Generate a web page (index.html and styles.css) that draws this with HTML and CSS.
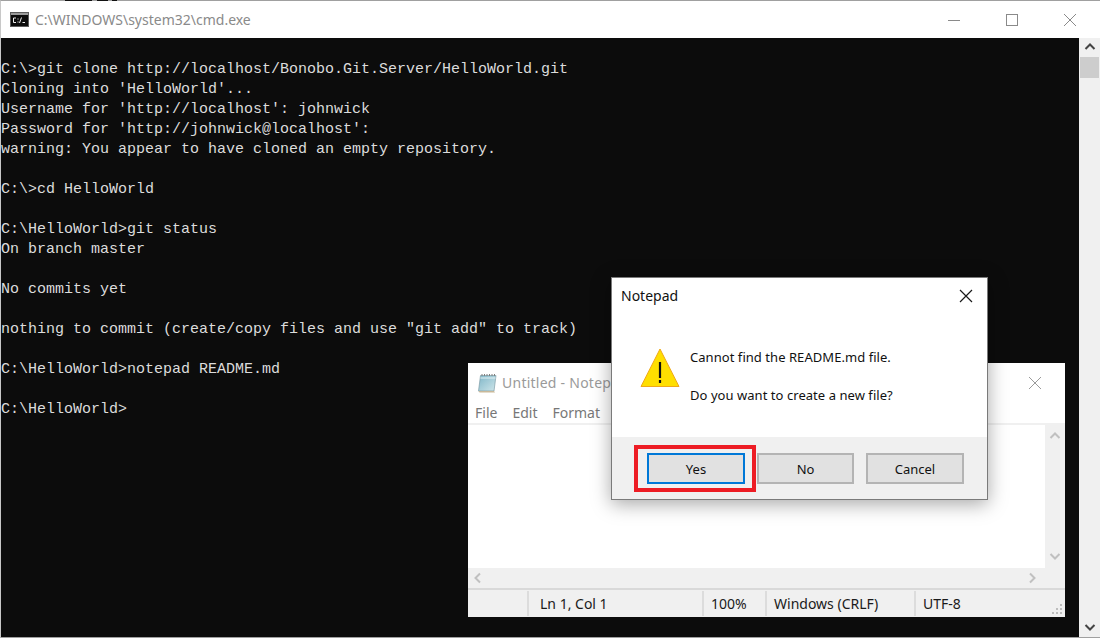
FILE: index.html
```html
<!DOCTYPE html>
<html lang="en">
<head>
<meta charset="utf-8">
<title>cmd and Notepad</title>
<link rel="stylesheet" href="styles.css">
</head>
<body>
<main class="desktop">
  <section class="console-window">
    <header class="console-title">
      <svg class="cmd-icon" width="19" height="15" viewBox="0 0 19 15">
        <rect x="0" y="0" width="19" height="15" fill="#5c5c5c"/>
        <rect x="1" y="1" width="17" height="2" fill="#9a9a9a"/>
        <rect x="1" y="3" width="17" height="11" fill="#0c0c0c"/>
        <path d="M6 6H3.5V10.5H6M8 6.5v1M8 9.5v1M11.5 5.5L9.5 11M12.5 10.5H15" fill="none" stroke="#f0f0f0" stroke-width="1"/>
      </svg>
      <span class="console-title-text">C:\WINDOWS\system32\cmd.exe</span>
      <div class="window-controls">
        <svg width="14" height="14" viewBox="0 0 14 14"><path d="M1 7.5H13" stroke="#8a8a8a" stroke-width="1"/></svg>
        <svg width="14" height="14" viewBox="0 0 14 14"><rect x="1.5" y="1.5" width="11" height="11" fill="none" stroke="#8a8a8a"/></svg>
        <svg width="14" height="14" viewBox="0 0 14 14"><path d="M1 1L13 13M13 1L1 13" stroke="#8a8a8a" stroke-width="1"/></svg>
      </div>
    </header>
    <div class="console-body">
<pre class="console-text">
C:\&gt;git clone http://localhost/Bonobo.Git.Server/HelloWorld.git
Cloning into 'HelloWorld'...
Username for 'http://localhost': johnwick
Password for 'http://johnwick@localhost':
warning: You appear to have cloned an empty repository.

C:\&gt;cd HelloWorld

C:\HelloWorld&gt;git status
On branch master

No commits yet

nothing to commit (create/copy files and use "git add" to track)

C:\HelloWorld&gt;notepad README.md

C:\HelloWorld&gt;</pre>
      <div class="console-scrollbar">
        <svg width="20" height="17" viewBox="0 0 20 17"><path d="M5.5 11L10 6.5L14.5 11" fill="none" stroke="#444" stroke-width="2"/></svg>
        <div class="console-thumb"></div>
        <svg class="scroll-end" width="20" height="17" viewBox="0 0 20 17"><path d="M5.5 6L10 10.5L14.5 6" fill="none" stroke="#444" stroke-width="2"/></svg>
      </div>
    </div>
  </section>

  <section class="notepad-window">
    <header class="notepad-title">
      <svg width="20" height="20" viewBox="0 0 20 20">
        <defs>
          <linearGradient id="pad" x1="0" y1="0" x2="1" y2="1">
            <stop offset="0" stop-color="#7fb6c8"/>
            <stop offset="1" stop-color="#cfe6ea"/>
          </linearGradient>
        </defs>
        <path d="M3.5 2.5H19L17 18H1.5Z" fill="url(#pad)" stroke="#7f9ea8" stroke-width="0.7"/>
        <path d="M1.5 18H17L18 19.5H2.5Z" fill="#c9b99a"/>
        <path d="M5 3V1M7.5 3V1M10 3V1M12.5 3V1M15 3V1M17.5 3V1" stroke="#808080" stroke-width="1"/>
        <path d="M3.5 5H18.5" stroke="#e4f2f5" stroke-width="1"/>
      </svg>
      <span class="notepad-title-text">Untitled - Notep</span>
      <svg class="notepad-close" width="14" height="14" viewBox="0 0 14 14"><path d="M1 1L13 13M13 1L1 13" stroke="#9a9a9a" stroke-width="1"/></svg>
    </header>
    <nav class="notepad-menu">
      <span>File</span><span>Edit</span><span>Format</span>
    </nav>
    <div class="notepad-edit">
      <div class="notepad-area"></div>
      <div class="notepad-vscroll">
        <svg width="20" height="17" viewBox="0 0 20 17"><path d="M5.5 11L10 6.5L14.5 11" fill="none" stroke="#c0c0c0" stroke-width="2"/></svg>
        <svg width="20" height="17" viewBox="0 0 20 17"><path d="M5.5 6L10 10.5L14.5 6" fill="none" stroke="#c0c0c0" stroke-width="2"/></svg>
      </div>
    </div>
    <div class="notepad-hscroll">
      <svg width="17" height="20" viewBox="0 0 17 20"><path d="M11 5.5L6.5 10L11 14.5" fill="none" stroke="#c0c0c0" stroke-width="2"/></svg>
      <svg width="17" height="20" viewBox="0 0 17 20"><path d="M6 5.5L10.5 10L6 14.5" fill="none" stroke="#c0c0c0" stroke-width="2"/></svg>
    </div>
    <footer class="notepad-status">
      <span class="cell cell-blank"></span>
      <span class="cell cell-pos">Ln 1, Col 1</span>
      <span class="cell cell-zoom">100%</span>
      <span class="cell cell-eol">Windows (CRLF)</span>
      <span class="cell cell-enc">UTF-8</span>
      <svg class="grip" width="12" height="12" viewBox="0 0 12 12"><path d="M9 1h2v2H9zM5 5h2v2H5zM9 5h2v2H9zM1 9h2v2H1zM5 9h2v2H5zM9 9h2v2H9z" fill="#bdbdbd"/></svg>
    </footer>
  </section>

  <section class="dialog">
    <header class="dialog-title">
      <span>Notepad</span>
      <svg width="14" height="14" viewBox="0 0 14 14"><path d="M1 1L13 13M13 1L1 13" stroke="#1a1a1a" stroke-width="1.2"/></svg>
    </header>
    <div class="dialog-body">
      <svg class="warn" width="40" height="40" viewBox="0 0 40 40">
        <path d="M20 1L39 38.5H1Z" fill="#ffdf00" stroke="#f0a818" stroke-width="1"/>
        <path d="M20 14V30" stroke="#111" stroke-width="2.2"/>
        <path d="M20 32V35" stroke="#111" stroke-width="2.2"/>
      </svg>
      <div class="dialog-msg">
        <p>Cannot find the README.md file.</p>
        <p>Do you want to create a new file?</p>
      </div>
    </div>
    <div class="dialog-buttons">
      <button class="btn btn-default">Yes</button>
      <button class="btn btn-narrow">No</button>
      <button class="btn">Cancel</button>
      <div class="highlight"></div>
    </div>
  </section>
</main>
</body>
</html>
```

FILE: styles.css
```css
* { box-sizing: border-box; }
html, body { margin: 0; padding: 0; }
body { width: 1100px; height: 638px; overflow: hidden; background: #fff; }
.desktop { position: relative; width: 1100px; height: 638px; }
.desktop::before {
  content: ""; position: absolute; left: 0; top: 0; width: 120px; height: 1px;
  background: linear-gradient(90deg,
    transparent 0 65px, #111 65px 92px, transparent 92px 97px,
    #111 97px 108px, transparent 108px 112px, #111 112px 117px, transparent 117px);
}

.console-window {
  display: flex; flex-direction: column;
  width: 1100px; height: 638px;
  border-top: 1px solid #a0a0a0;
  border-bottom: 1px solid #a0a0a0;
  border-left: 1px solid #c8c8c8;
  background: #fff;
}
.console-title {
  flex: none; height: 37px;
  display: flex; align-items: center;
  padding-left: 9px;
}
.cmd-icon { flex: none; }
.console-title-text {
  margin-left: 6px;
  font: 14px "Noto Sans", sans-serif;
  color: #8a8a8a;
}
.window-controls {
  margin-left: auto; margin-right: 23px;
  display: flex; gap: 44px;
}
.console-body { flex: 1; display: flex; min-height: 0; background: #0c0c0c; }
.console-text {
  flex: 1; margin: 0; padding: 22px 0 0;
  font: 15px/20px "Liberation Mono", monospace;
  color: #dcdcdc;
}
.console-scrollbar {
  flex: none; width: 21px;
  background: #f0f0f0;
  display: flex; flex-direction: column; align-items: center;
}
.console-thumb { width: 19px; height: 21px; background: #cdcdcd; margin-top: 2px; }
.scroll-end { margin-top: auto; margin-bottom: 1px; }

.notepad-window {
  position: absolute; left: 468px; top: 363px;
  width: 597px; height: 254px;
  display: flex; flex-direction: column;
  background: #fff;
  font-family: "Noto Sans", sans-serif;
}
.notepad-title { flex: none; height: 39px; display: flex; align-items: center; padding-left: 9px; padding-right: 23px; }
.notepad-title-text { margin-left: 5px; font-size: 14px; letter-spacing: 0.25px; color: #9a9a9a; }
.notepad-close { margin-left: auto; }
.notepad-menu {
  flex: none; height: 23px;
  display: flex; align-items: center; gap: 15px;
  padding-left: 7px;
  font-size: 14px; color: #777;
  border-bottom: 2px solid #f0f0f0;
}
.notepad-edit { flex: 1; display: flex; min-height: 0; }
.notepad-area { flex: 1; }
.notepad-vscroll {
  flex: none; width: 20px; background: #f0f0f0;
  display: flex; flex-direction: column; justify-content: space-between;
  padding: 2px 0 3px;
}
.notepad-hscroll {
  flex: none; height: 20px; background: #f0f0f0;
  display: flex; justify-content: space-between; padding: 0 24px 0 1px;
}
.notepad-status {
  flex: none; height: 29px; position: relative;
  display: flex; background: #f0f0f0;
  border-top: 2px solid #d9d9d9;
  font-size: 14px; color: #1a1a1a;
}
.cell { display: flex; align-items: center; padding-left: 11px; border-left: 2px solid #dcdcdc; margin: 1px 0; white-space: nowrap; }
.cell-blank { width: 59px; border-left: 0; }
.cell-pos { width: 175px; }
.cell-zoom { width: 63px; padding-left: 7px; }
.cell-eol { width: 149px; padding-left: 7px; }
.cell-enc { flex: 1; padding-left: 7px; }
.grip { position: absolute; right: 2px; bottom: 2px; }

.dialog {
  position: absolute; left: 611px; top: 277px;
  width: 377px; height: 223px;
  display: flex; flex-direction: column;
  background: #fff;
  border: 1px solid #7a7a7a;
  box-shadow: 0 4px 18px rgba(0,0,0,.35);
  font-family: "Noto Sans", sans-serif;
  color: #111;
}
.dialog-title {
  flex: none; height: 37px;
  display: flex; align-items: center; justify-content: space-between;
  padding: 0 14px 2px 9px;
  font-size: 14px;
}
.dialog-body { flex: 1; display: flex; padding-left: 28px; padding-top: 33px; }
.warn { flex: none; }
.dialog-msg { margin-left: 10px; font-size: 13px; line-height: 18px; letter-spacing: 0.05px; }
.dialog-msg p { margin: 0 0 20px; white-space: nowrap; }
.dialog-buttons {
  flex: none; height: 62px; position: relative;
  background: #f0f0f0;
  display: flex; gap: 12px;
  padding: 16px 0 0 35px;
}
.btn {
  width: 98px; height: 31px;
  background: #e1e1e1;
  border: 2px solid #b4b4b4;
  font: 13px "Noto Sans", sans-serif;
  color: #111;
  padding: 0;
}
.btn-narrow { width: 97px; }
.btn-default { border-color: #0078d7; }
.highlight {
  position: absolute; left: 22px; top: 8px;
  width: 122px; height: 47px;
  border: 4px solid #ed1c24;
}
```
